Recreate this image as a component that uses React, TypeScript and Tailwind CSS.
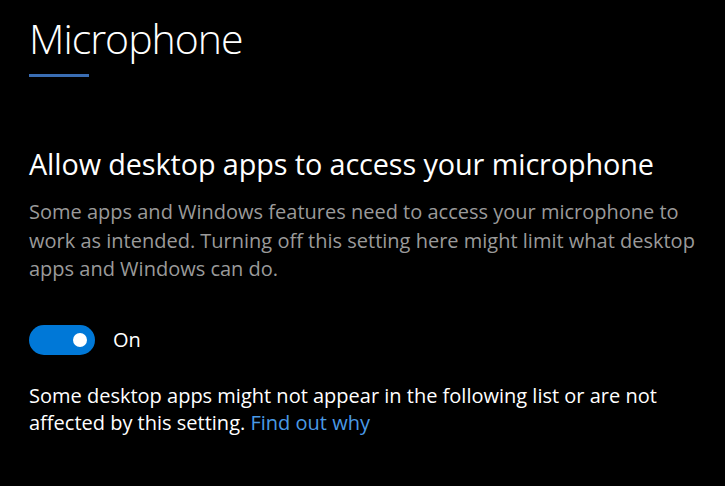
import React, { useState } from 'react';

export default function App() {
  const [isOn, setIsOn] = useState(true);

  return (
    <div
      className="w-[725px] h-[486px] bg-black text-white overflow-hidden px-[29px]"
      style={{ fontFamily: '"Open Sans", "Noto Sans", sans-serif' }}
    >
      {/* Page title */}
      <h1 className="pt-[12px] text-[41px] leading-[52px] font-light tracking-[-1px]">Microphone</h1>
      <div className="mt-[10px] w-[60px] h-[3px] bg-[#3a6db3]"></div>

      {/* Section */}
      <h2 className="mt-[70px] text-[28.8px] leading-[34px] font-normal tracking-[-0.1px]">
        Allow desktop apps to access your microphone
      </h2>
      <p className="mt-[17px] w-[672px] text-[20px] leading-[28.5px] text-[#9a9a9a]">
        Some apps and Windows features need to access your microphone to work as intended. Turning off this setting
        here might limit what desktop apps and Windows can do.
      </p>

      {/* Toggle */}
      <div className="mt-[41px] flex items-center gap-[18px]">
        <button
          onClick={() => setIsOn(!isOn)}
          className={`w-[66px] h-[30px] rounded-full flex items-center px-[8px] ${
            isOn ? 'bg-[#0078d7] justify-end' : 'bg-transparent border-2 border-white justify-start'
          }`}
        >
          <span className="w-[14px] h-[14px] rounded-full bg-white"></span>
        </button>
        <span className="text-[20px] leading-[30px]">{isOn ? 'On' : 'Off'}</span>
      </div>

      <p className="mt-[27px] w-[672px] text-[20px] leading-[27.5px]">
        Some desktop apps might not appear in the following list or are not affected by this setting.{' '}
        <a className="text-[#4a9ae6] leading-[27.5px]">Find out why</a>
      </p>
    </div>
  );
}
